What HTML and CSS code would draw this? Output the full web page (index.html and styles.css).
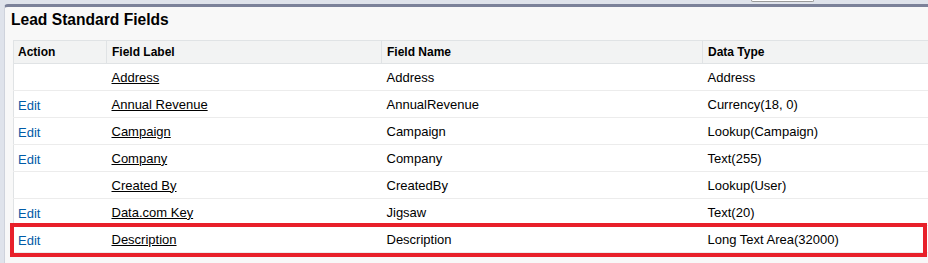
FILE: index.html
```html
<!DOCTYPE html>
<html>
<head>
<meta charset="utf-8">
<link rel="stylesheet" href="styles.css">
</head>
<body>
<div class="page">
  <div class="topbar"><div class="searchbox"></div></div>
  <div class="panel">
    <h3 class="title">Lead Standard Fields</h3>
    <table class="list">
      <colgroup>
        <col class="c-action">
        <col class="c-label">
        <col class="c-name">
        <col class="c-type">
      </colgroup>
      <thead>
        <tr>
          <th>Action</th>
          <th>Field Label</th>
          <th>Field Name</th>
          <th>Data Type</th>
        </tr>
      </thead>
      <tbody>
        <tr><td></td><td><a href="#">Address</a></td><td>Address</td><td>Address</td></tr>
        <tr><td><a class="edit" href="#">Edit</a></td><td><a href="#">Annual Revenue</a></td><td>AnnualRevenue</td><td>Currency(18, 0)</td></tr>
        <tr><td><a class="edit" href="#">Edit</a></td><td><a href="#">Campaign</a></td><td>Campaign</td><td>Lookup(Campaign)</td></tr>
        <tr><td><a class="edit" href="#">Edit</a></td><td><a href="#">Company</a></td><td>Company</td><td>Text(255)</td></tr>
        <tr><td></td><td><a href="#">Created By</a></td><td>CreatedBy</td><td>Lookup(User)</td></tr>
        <tr><td><a class="edit" href="#">Edit</a></td><td><a href="#">Data.com Key</a></td><td>Jigsaw</td><td>Text(20)</td></tr>
        <tr><td><a class="edit" href="#">Edit</a></td><td><a href="#">Description</a></td><td>Description</td><td>Long Text Area(32000)</td></tr>
      </tbody>
    </table>
  </div>
  <div class="highlight"></div>
</div>
</body>
</html>
```
FILE: styles.css
```css
html, body {
  margin: 0;
  padding: 0;
}
body {
  background: #dfe3eb;
  font-family: "Liberation Sans", Arial, sans-serif;
  color: #000;
  overflow: hidden;
}
.page {
  position: relative;
  width: 928px;
  height: 263px;
  overflow: hidden;
}
.topbar {
  height: 4px;
}
.searchbox {
  margin-left: 751px;
  width: 61px;
  height: 1px;
  background: #fff;
  border: 1px solid #9a9a9a;
  border-top: none;
  border-radius: 0 0 2px 2px;
}
.panel {
  margin-left: 4px;
  background: #f8f8f8;
  border-left: 1px solid #cfd3dc;
  border-top: 3px solid #7b8199;
  border-top-left-radius: 4px;
  height: 256px;
}
.title {
  margin: 0 0 11px 0;
  padding: 4px 0 0 6px;
  font-size: 15.6px;
  line-height: 18px;
  font-weight: bold;
}
.list {
  margin-left: 8px;
  width: 1000px;
  table-layout: fixed;
  border-collapse: collapse;
  background: #fff;
  border-left: 1px solid #e0e3e5;
}
.c-action { width: 93px; }
.c-label { width: 275px; }
.c-name { width: 321px; }
.c-type { width: 311px; }
.list th {
  background: #f2f3f3;
  font-size: 12px;
  font-weight: bold;
  text-align: left;
  height: 22px;
  padding: 0 0 0 5px;
  border-top: 1px solid #e0e3e5;
  border-bottom: 1px solid #e0e3e5;
  border-left: 1px solid #e0e3e5;
}
.list th:first-child {
  padding-left: 4px;
  border-left: none;
}
.list td {
  font-size: 13px;
  line-height: 15px;
  height: 26px;
  padding: 0 0 0 5px;
  border-bottom: 1px solid #ececec;
  vertical-align: middle;
}
.list td:first-child {
  padding-left: 4px;
}
.list a {
  color: #000;
  text-decoration: underline;
}
.list a.edit {
  position: relative;
  top: 1px;
  color: #015ba7;
  text-decoration: none;
}
.highlight {
  position: absolute;
  left: 10px;
  top: 223px;
  width: 909px;
  height: 26px;
  border: 4px solid #e8202a;
}
```
